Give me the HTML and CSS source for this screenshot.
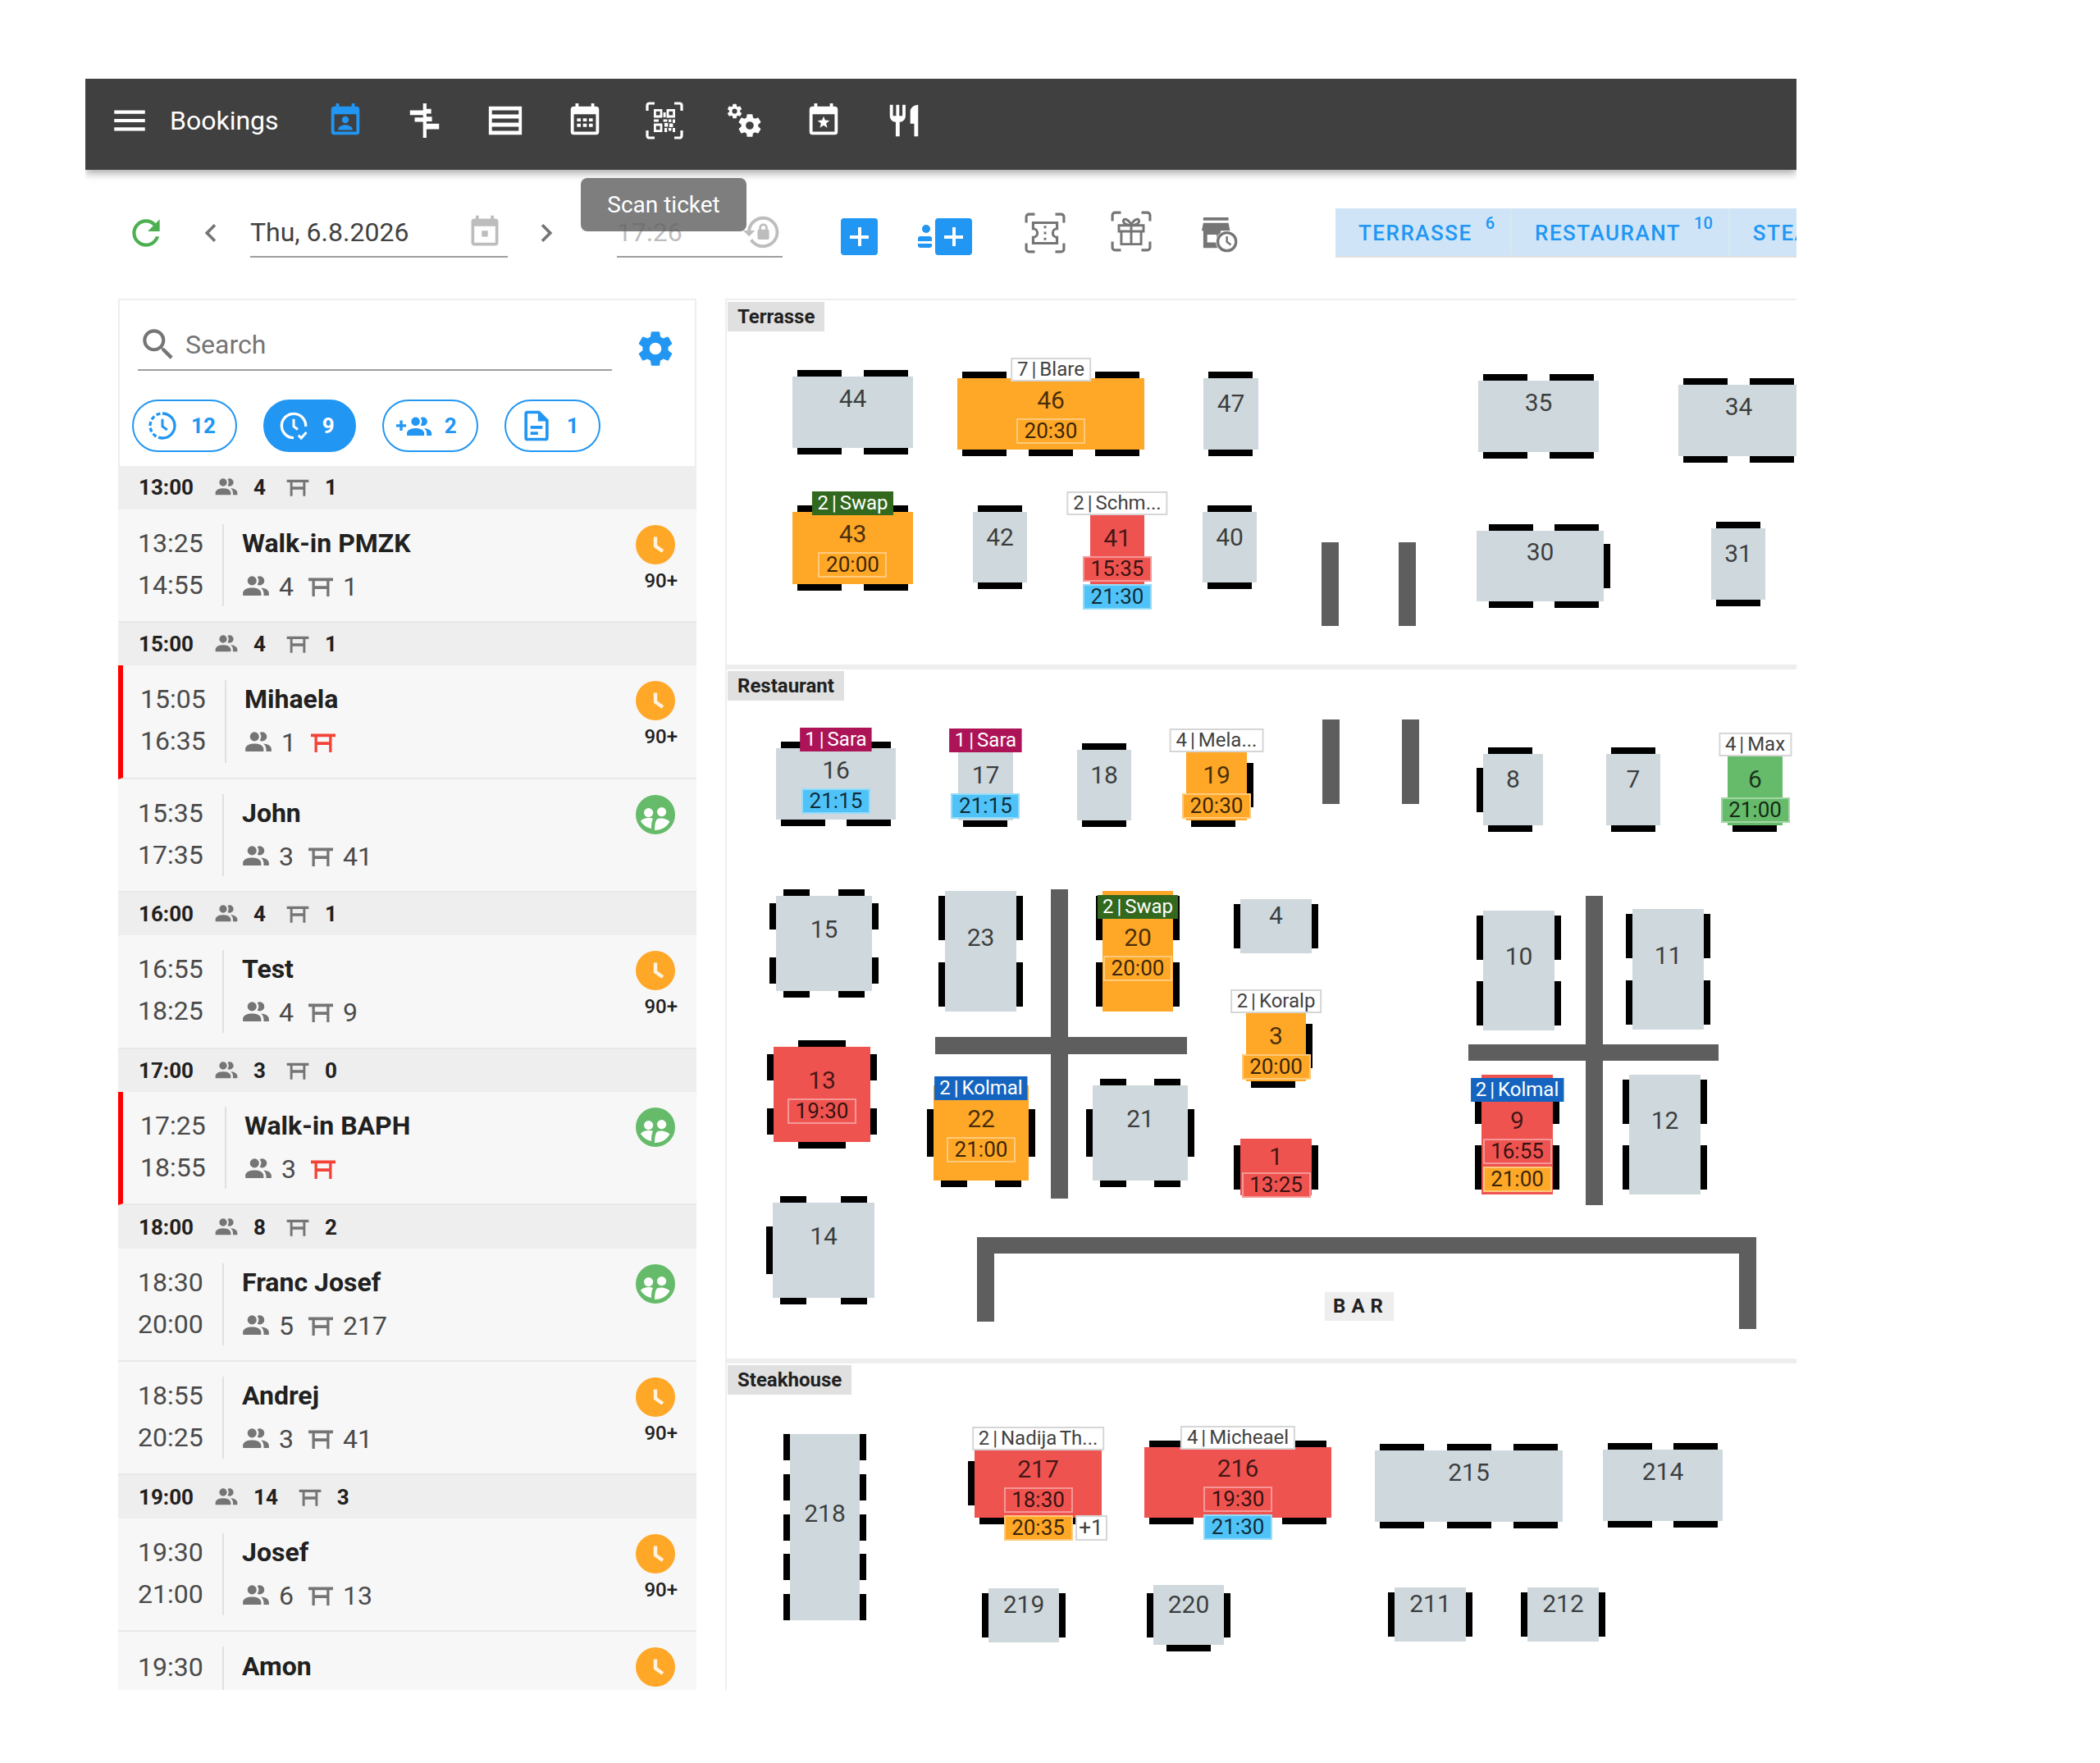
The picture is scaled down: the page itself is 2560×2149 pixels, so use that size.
FILE: index.html
```html
<!DOCTYPE html>
<html lang="en">
<head>
    <meta charset="UTF-8">
    <title>Bookings</title>
    <link rel="stylesheet" href="styles.css">
</head>
<body>
    <!-- Icon sprite -->
    <svg class="sprite" xmlns="http://www.w3.org/2000/svg">
        <symbol id="i-menu" viewBox="0 0 24 24"><path d="M3 6h18v2H3zM3 11h18v2H3zM3 16h18v2H3z"/></symbol>
        <symbol id="i-cal-account" viewBox="0 0 24 24"><path fill-rule="evenodd" d="M19 3h-1V1h-2v2H8V1H6v2H5a2 2 0 0 0-2 2v14a2 2 0 0 0 2 2h14a2 2 0 0 0 2-2V5a2 2 0 0 0-2-2zM5 8h14v11H5z"/><path d="M12 9.3a2.2 2.2 0 1 1 0 4.4a2.2 2.2 0 0 1 0-4.4zM7.5 18v-.8c0-1.6 3-2.5 4.5-2.5s4.5.9 4.5 2.5v.8z"/></symbol>
        <symbol id="i-gantt" viewBox="0 0 24 24"><path d="M10.800 1H13v22h-2.200zM2.500 5.500h8.300v3H2.500zM5.500 10h5.300v2.800H5.500zM13 4.500h3v3h-3zM13 9.500h3.500v3H13zM13 14h8v3.500h-8z"/></symbol>
        <symbol id="i-list" viewBox="0 0 24 24"><path fill-rule="evenodd" d="M1.500 3h21v18h-21zM3.500 5.500v2.600h17V5.500zM3.500 10.700v2.600h17v-2.600zM3.500 15.900v2.600h17v-2.600z"/></symbol>
        <symbol id="i-cal-month" viewBox="0 0 24 24"><path fill-rule="evenodd" d="M19 3h-1V1h-2v2H8V1H6v2H5a2 2 0 0 0-2 2v14a2 2 0 0 0 2 2h14a2 2 0 0 0 2-2V5a2 2 0 0 0-2-2zM5 8h14v11H5z"/><path d="M7 10.5h2.4v2H7zM10.8 10.5h2.4v2h-2.4zM14.6 10.5H17v2h-2.4zM7 14h2.4v2H7zM10.8 14h2.4v2h-2.4zM14.6 14H17v2h-2.4z"/></symbol>
        <symbol id="i-cal-star" viewBox="0 0 24 24"><path fill-rule="evenodd" d="M19 3h-1V1h-2v2H8V1H6v2H5a2 2 0 0 0-2 2v14a2 2 0 0 0 2 2h14a2 2 0 0 0 2-2V5a2 2 0 0 0-2-2zM5 8h14v11H5z"/><path d="M12 9.2l1 2.6 2.8.2-2.2 1.8.8 2.7L12 15l-2.4 1.5.8-2.7-2.2-1.8 2.8-.2z"/></symbol>
        <symbol id="i-cal-today" viewBox="0 0 24 24"><path fill-rule="evenodd" d="M19 3h-1V1h-2v2H8V1H6v2H5a2 2 0 0 0-2 2v14a2 2 0 0 0 2 2h14a2 2 0 0 0 2-2V5a2 2 0 0 0-2-2zM5 8h14v11H5zM10 11v4h4v-4z"/></symbol>
        <symbol id="i-qr" viewBox="0 0 24 24">
            <path fill="none" stroke="currentColor" stroke-width="1.600" d="M1.500 6V2.700a1.200 1.200 0 0 1 1.200-1.200H6M18 1.500h3.300a1.200 1.200 0 0 1 1.200 1.200V6M22.500 18v3.300a1.200 1.200 0 0 1-1.200 1.200H18M6 22.500H2.700a1.200 1.200 0 0 1-1.200-1.200V18"/>
            <path fill-rule="evenodd" d="M5.500 5h5.200v5.200H5.500zM6.900 6.400v2.400h2.400V6.400zM13.300 5h5.200v5.200h-5.200zM14.700 6.400v2.400h2.400V6.400zM5.500 13.800h5.200V19H5.500zM6.900 15.200v2.400h2.400v-2.400z"/>
            <path d="M11.300 7h1.500v3h-1.500zM11.300 11.200h2.400v1.500h-2.400zM5.500 11.200h3v1.500h-3zM14.500 11.200h1.700v1.700h-1.700zM17 11.200h1.500v2.200h-1.500zM12 13.500h2.200v2.200H12zM15 13.800h2.200v2.200H15zM12 16.500h1.600V19H12zM14.500 16.500h1.700v1.700h-1.700zM17 16.500h1.500V19H17z"/>
        </symbol>
        <symbol id="i-cog" viewBox="0 0 24 24"><path d="M12,15.5A3.5,3.5 0 0,1 8.5,12A3.5,3.5 0 0,1 12,8.5A3.5,3.5 0 0,1 15.5,12A3.5,3.5 0 0,1 12,15.5M19.43,12.97C19.47,12.65 19.5,12.33 19.5,12C19.5,11.67 19.47,11.34 19.43,11L21.54,9.37C21.73,9.22 21.78,8.95 21.66,8.73L19.66,5.27C19.54,5.05 19.27,4.96 19.05,5.05L16.56,6.05C16.04,5.66 15.5,5.32 14.87,5.07L14.5,2.42C14.46,2.18 14.25,2 14,2H10C9.75,2 9.54,2.18 9.5,2.42L9.13,5.07C8.5,5.32 7.96,5.66 7.44,6.05L4.95,5.05C4.73,4.96 4.46,5.05 4.34,5.27L2.34,8.73C2.21,8.95 2.27,9.22 2.46,9.37L4.57,11C4.53,11.34 4.5,11.67 4.5,12C4.5,12.33 4.53,12.65 4.57,12.97L2.46,14.63C2.27,14.78 2.21,15.05 2.34,15.27L4.34,18.73C4.46,18.95 4.73,19.03 4.95,18.95L7.44,17.94C7.96,18.34 8.5,18.68 9.13,18.93L9.5,21.58C9.54,21.82 9.75,22 10,22H14C14.25,22 14.46,21.82 14.5,21.58L14.87,18.93C15.5,18.67 16.04,18.34 16.56,17.94L19.05,18.95C19.27,19.03 19.54,18.95 19.66,18.73L21.66,15.27C21.78,15.05 21.73,14.78 21.54,14.63L19.43,12.97Z"/></symbol>
        <symbol id="i-cogs" viewBox="0 0 24 24">
            <path transform="translate(.5 .5) scale(.46)" d="M12,15.5A3.5,3.5 0 0,1 8.5,12A3.5,3.5 0 0,1 12,8.5A3.5,3.5 0 0,1 15.5,12A3.5,3.5 0 0,1 12,15.5M19.43,12.97C19.47,12.65 19.5,12.33 19.5,12C19.5,11.67 19.47,11.34 19.43,11L21.54,9.37C21.73,9.22 21.78,8.95 21.66,8.73L19.66,5.27C19.54,5.05 19.27,4.96 19.05,5.05L16.56,6.05C16.04,5.66 15.5,5.32 14.87,5.07L14.5,2.42C14.46,2.18 14.25,2 14,2H10C9.75,2 9.54,2.18 9.5,2.42L9.13,5.07C8.5,5.32 7.96,5.66 7.44,6.05L4.95,5.05C4.73,4.96 4.46,5.05 4.34,5.27L2.34,8.73C2.21,8.95 2.27,9.22 2.46,9.37L4.57,11C4.53,11.34 4.5,11.67 4.5,12C4.5,12.33 4.53,12.65 4.57,12.97L2.46,14.63C2.27,14.78 2.21,15.05 2.34,15.27L4.34,18.73C4.46,18.95 4.73,19.03 4.95,18.95L7.44,17.94C7.96,18.34 8.5,18.68 9.13,18.93L9.5,21.58C9.54,21.82 9.75,22 10,22H14C14.25,22 14.46,21.82 14.5,21.58L14.87,18.93C15.5,18.67 16.04,18.34 16.56,17.94L19.05,18.95C19.27,19.03 19.54,18.95 19.66,18.73L21.66,15.27C21.78,15.05 21.73,14.78 21.54,14.63L19.43,12.97Z"/>
            <path transform="translate(7 6.500) scale(.72)" d="M12,15.5A3.5,3.5 0 0,1 8.5,12A3.5,3.5 0 0,1 12,8.5A3.5,3.5 0 0,1 15.5,12A3.5,3.5 0 0,1 12,15.5M19.43,12.97C19.47,12.65 19.5,12.33 19.5,12C19.5,11.67 19.47,11.34 19.43,11L21.54,9.37C21.73,9.22 21.78,8.95 21.66,8.73L19.66,5.27C19.54,5.05 19.27,4.96 19.05,5.05L16.56,6.05C16.04,5.66 15.5,5.32 14.87,5.07L14.5,2.42C14.46,2.18 14.25,2 14,2H10C9.75,2 9.54,2.18 9.5,2.42L9.13,5.07C8.5,5.32 7.96,5.66 7.44,6.05L4.95,5.05C4.73,4.96 4.46,5.05 4.34,5.27L2.34,8.73C2.21,8.95 2.27,9.22 2.46,9.37L4.57,11C4.53,11.34 4.5,11.67 4.5,12C4.5,12.33 4.53,12.65 4.57,12.97L2.46,14.63C2.27,14.78 2.21,15.05 2.34,15.27L4.34,18.73C4.46,18.95 4.73,19.03 4.95,18.95L7.44,17.94C7.96,18.34 8.5,18.68 9.13,18.93L9.5,21.58C9.54,21.82 9.75,22 10,22H14C14.25,22 14.46,21.82 14.5,21.58L14.87,18.93C15.5,18.67 16.04,18.34 16.56,17.94L19.05,18.95C19.27,19.03 19.54,18.95 19.66,18.73L21.66,15.27C21.78,15.05 21.73,14.78 21.54,14.63L19.43,12.97Z"/>
        </symbol>
        <symbol id="i-cutlery" viewBox="0 0 24 24"><path d="M11,9H9V2H7V9H5V2H3V9C3,11.12 4.66,12.84 6.75,12.97V22H9.25V12.97C11.34,12.84 13,11.12 13,9V2H11V9M16,6V14H18.5V22H21V2C18.24,2 16,4.24 16,6Z"/></symbol>
        <symbol id="i-refresh" viewBox="0 0 24 24"><path d="M17.65,6.35C16.2,4.9 14.21,4 12,4A8,8 0 0,0 4,12A8,8 0 0,0 12,20C15.73,20 18.84,17.45 19.73,14H17.65C16.83,16.33 14.61,18 12,18A6,6 0 0,1 6,12A6,6 0 0,1 12,6C13.66,6 15.14,6.69 16.22,7.78L13,11H20V4L17.65,6.35Z"/></symbol>
        <symbol id="i-left" viewBox="0 0 24 24"><path d="M15.41,16.58L10.83,12L15.41,7.41L14,6L8,12L14,18L15.41,16.58Z"/></symbol>
        <symbol id="i-right" viewBox="0 0 24 24"><path d="M8.59,16.58L13.17,12L8.59,7.41L10,6L16,12L10,18L8.59,16.58Z"/></symbol>
        <symbol id="i-lock-reset" viewBox="0 0 24 24"><path d="M12.63,2C18.16,2 22.64,6.5 22.64,12C22.64,17.5 18.16,22 12.63,22C9.12,22 6.05,20.18 4.26,17.43L5.84,16.18C7.25,18.47 9.76,20 12.64,20A8,8 0 0,0 20.64,12A8,8 0 0,0 12.64,4C8.56,4 5.2,7.06 4.71,11H7.47L3.73,14.73L0,11H2.69C3.19,5.95 7.45,2 12.63,2M15.59,10.24C16.09,10.25 16.5,10.65 16.5,11.16V15.77C16.5,16.27 16.09,16.69 15.58,16.69H10.05C9.54,16.69 9.13,16.27 9.13,15.77V11.16C9.13,10.65 9.54,10.25 10.04,10.24V9.23C10.04,7.7 11.29,6.46 12.81,6.46C14.34,6.46 15.59,7.7 15.59,9.23V10.24M12.81,7.86C12.06,7.86 11.44,8.47 11.44,9.23V10.24H14.19V9.23C14.19,8.47 13.57,7.86 12.81,7.86Z"/></symbol>
        <symbol id="i-ticket-scan" viewBox="0 0 24 24">
            <path fill="none" stroke="currentColor" stroke-width="1.500" d="M1 6V2.500A1.500 1.500 0 0 1 2.500 1H6M18 1h3.500A1.500 1.500 0 0 1 23 2.500V6M23 18v3.500a1.500 1.500 0 0 1-1.500 1.500H18M6 23H2.500A1.500 1.500 0 0 1 1 21.500V18"/>
            <path fill="none" stroke="currentColor" stroke-width="1.500" d="M5 6h14v3.500a2.500 2.500 0 0 0 0 5V18H5v-3.500a2.500 2.500 0 0 0 0-5z"/>
            <path d="M11.300 7.800h1.400v1.400h-1.400zM11.300 11.300h1.400v1.400h-1.400zM11.300 14.800h1.400v1.400h-1.400z"/>
        </symbol>
        <symbol id="i-gift-scan" viewBox="0 0 24 24">
            <path fill="none" stroke="currentColor" stroke-width="1.500" d="M1 6V2.500A1.500 1.500 0 0 1 2.500 1H6M18 1h3.500A1.500 1.500 0 0 1 23 2.500V6M23 18v3.500a1.500 1.500 0 0 1-1.500 1.500H18M6 23H2.500A1.500 1.500 0 0 1 1 21.500V18"/>
            <path fill="none" stroke="currentColor" stroke-width="1.400" d="M6.200 12h11.600v7.500H6.200zM4.800 8.500h14.400V12H4.800zM12 8.500v11M12 8.500c-1-3-4-4.500-4.500-3S9 8.500 12 8.500c3 0 5-1.500 4.500-3S13 5.500 12 8.500z"/>
        </symbol>
        <symbol id="i-store-clock" viewBox="0 0 24 24">
            <path fill-rule="evenodd" d="M1.500 1h16v2h-16zM1.500 4.500h16l1 5H.5zM1.500 9.500h11v11h-11zM4 12v5h6v-5z"/>
            <circle cx="16.500" cy="16.500" r="7" fill="#fff"/>
            <circle cx="16.500" cy="16.500" r="5.800" fill="none" stroke="currentColor" stroke-width="1.700"/>
            <path fill="none" stroke="currentColor" stroke-width="1.300" d="M16.500 13v3.500l2.500 2"/>
        </symbol>
        <symbol id="i-search" viewBox="0 0 24 24"><path d="M9.5,3A6.5,6.5 0 0,1 16,9.5C16,11.11 15.41,12.59 14.44,13.73L14.71,14H15.5L20.5,19L19,20.5L14,15.5V14.71L13.73,14.44C12.59,15.41 11.11,16 9.5,16A6.5,6.5 0 0,1 3,9.5A6.5,6.5 0 0,1 9.5,3M9.5,5C7,5 5,7 5,9.5C5,12 7,14 9.5,14C12,14 14,12 14,9.5C14,7 12,5 9.5,5Z"/></symbol>
        <symbol id="i-clock-dash" viewBox="0 0 24 24">
            <path fill="none" stroke="currentColor" stroke-width="2" d="M12 3a9 9 0 0 1 0 18"/>
            <path fill="none" stroke="currentColor" stroke-width="2" stroke-dasharray="3 1.700" d="M12 21a9 9 0 0 1 0-18"/>
            <path fill="none" stroke="currentColor" stroke-width="1.800" d="M12 7v5.500l3.500 2.500"/>
        </symbol>
        <symbol id="i-clock-check" viewBox="0 0 24 24">
            <path fill="none" stroke="currentColor" stroke-width="2" d="M20.800 12.500A8.800 8.800 0 1 0 12 20.800"/>
            <path fill="none" stroke="currentColor" stroke-width="1.800" d="M12 7v5.500l3 2.200M15.500 19l2 2 3.800-4.200"/>
        </symbol>
        <symbol id="i-people-plus" viewBox="0 0 24 24">
            <path d="M2.400 8.500v2.500H0v1.800h2.400v2.500h1.800v-2.500h2.400V11H4.200V8.500z"/>
            <path transform="translate(5.500 3) scale(.82)" d="M16 17V19H2V17S2 13 9 13 16 17 16 17M12.500 7.500A3.500 3.500 0 1 0 9 11A3.500 3.500 0 0 0 12.500 7.500M15.940 13A5.320 5.320 0 0 1 18 17V19H22V17S22 13.370 15.940 13M15 4A3.390 3.390 0 0 0 13.070 4.590A5 5 0 0 1 13.070 10.410A3.390 3.390 0 0 0 15 11A3.500 3.500 0 0 0 15 4Z"/>
        </symbol>
        <symbol id="i-doc" viewBox="0 0 24 24"><path d="M6,2A2,2 0 0,0 4,4V20A2,2 0 0,0 6,22H18A2,2 0 0,0 20,20V8L14,2H6M6,4H13V9H18V20H6V4M8,12V14H16V12H8M8,16V18H13V16H8Z"/></symbol>
        <symbol id="i-people" viewBox="0 0 24 24"><path d="M16 17V19H2V17S2 13 9 13 16 17 16 17M12.500 7.500A3.500 3.500 0 1 0 9 11A3.500 3.500 0 0 0 12.500 7.500M15.940 13A5.320 5.320 0 0 1 18 17V19H22V17S22 13.370 15.940 13M15 4A3.390 3.390 0 0 0 13.070 4.590A5 5 0 0 1 13.070 10.410A3.390 3.390 0 0 0 15 11A3.500 3.500 0 0 0 15 4Z"/></symbol>
        <symbol id="i-table" viewBox="0 0 24 24"><path fill-rule="evenodd" d="M2 5h20v2.500h-3V20h-2.200v-6H7.200v6H5V7.500H2zM7.200 7.500v4h9.600v-4z"/></symbol>
        <symbol id="i-wait" viewBox="0 0 24 24">
            <circle cx="12" cy="12" r="12" fill="#ffa726"/>
            <path fill="none" stroke="#fff" stroke-opacity=".85" stroke-width="2.200" d="M12 7.300V12.800L16.500 16"/>
        </symbol>
        <symbol id="i-seated" viewBox="0 0 24 24">
            <circle cx="12" cy="12" r="12" fill="#66bb6a"/>
            <circle cx="7.800" cy="10.800" r="2.800" fill="#fff"/>
            <circle cx="15.800" cy="10.300" r="2.800" fill="#fff"/>
            <path fill="#fff" d="M3 16c1.200-1.800 5.500-2.500 7.500-1.500-.8 1.200-1 3.500-1 6a10 10 0 0 1-6.500-4.500zM11.500 21.500c0-3 .5-5.800 1.500-6.800 2-1 6.500-.2 7.700 1.700a10.200 10.200 0 0 1-9.200 5.100z"/>
        </symbol>
    </svg>

    <div class="app">
        <!-- Top bar -->
        <header class="topbar">
            <svg class="menu-icon"><use href="#i-menu"/></svg>
            <span class="app-title">Bookings</span>
            <nav class="nav">
                <a class="nav-btn active"><svg><use href="#i-cal-account"/></svg></a>
                <a class="nav-btn"><svg><use href="#i-gantt"/></svg></a>
                <a class="nav-btn"><svg><use href="#i-list"/></svg></a>
                <a class="nav-btn"><svg><use href="#i-cal-month"/></svg></a>
                <a class="nav-btn"><svg class="big"><use href="#i-qr"/></svg></a>
                <a class="nav-btn"><svg><use href="#i-cogs"/></svg></a>
                <a class="nav-btn"><svg><use href="#i-cal-star"/></svg></a>
                <a class="nav-btn"><svg><use href="#i-cutlery"/></svg></a>
            </nav>
        </header>

        <!-- Toolbar -->
        <div class="toolbar">
            <svg class="refresh"><use href="#i-refresh"/></svg>
            <svg class="chevron prev"><use href="#i-left"/></svg>
            <div class="field date-field">
                <span>Thu, 6.8.2026</span>
                <svg><use href="#i-cal-today"/></svg>
            </div>
            <svg class="chevron next"><use href="#i-right"/></svg>
            <div class="field time-field">
                <span>17:26</span>
                <svg><use href="#i-lock-reset"/></svg>
            </div>
            <span class="add-btn"></span>
            <span class="add-list"><i class="dots"></i><span class="add-btn"></span></span>
            <svg class="tool ticket"><use href="#i-ticket-scan"/></svg>
            <svg class="tool gift"><use href="#i-gift-scan"/></svg>
            <svg class="tool store"><use href="#i-store-clock"/></svg>
            <div class="tabs">
                <a class="tab">TERRASSE<sup>6</sup></a>
                <a class="tab">RESTAURANT<sup>10</sup></a>
                <a class="tab">STEAKHOUSE</a>
            </div>
            <div class="tooltip">Scan ticket</div>
        </div>

        <div class="main">
            <!-- Bookings list -->
            <aside class="sidebar">
                <div class="filters">
                    <div class="search-row">
                        <div class="search">
                            <svg><use href="#i-search"/></svg>
                            <span>Search</span>
                        </div>
                        <svg class="search-cog"><use href="#i-cog"/></svg>
                    </div>
                    <div class="pills">
                        <span class="pill"><svg><use href="#i-clock-dash"/></svg>12</span>
                        <span class="pill on"><svg><use href="#i-clock-check"/></svg>9</span>
                        <span class="pill"><svg class="wide"><use href="#i-people-plus"/></svg>2</span>
                        <span class="pill"><svg class="wide"><use href="#i-doc"/></svg>1</span>
                    </div>
                </div>

                <div class="slot-head"><b>13:00</b><svg class="ic-p"><use href="#i-people"/></svg><b class="c">4</b><svg class="ic-t"><use href="#i-table"/></svg><b class="c">1</b></div>
                <div class="row">
                    <div class="times"><span>13:25</span><span>14:55</span></div>
                    <div class="info">
                        <div class="name">Walk-in PMZK</div>
                        <div class="meta"><svg class="ic-p"><use href="#i-people"/></svg><span class="c">4</span><svg class="ic-t"><use href="#i-table"/></svg><span class="c">1</span></div>
                    </div>
                    <div class="status"><svg><use href="#i-wait"/></svg><span>90+</span></div>
                </div>

                <div class="slot-head"><b>15:00</b><svg class="ic-p"><use href="#i-people"/></svg><b class="c">4</b><svg class="ic-t"><use href="#i-table"/></svg><b class="c">1</b></div>
                <div class="row alert">
                    <div class="times"><span>15:05</span><span>16:35</span></div>
                    <div class="info">
                        <div class="name">Mihaela</div>
                        <div class="meta"><svg class="ic-p"><use href="#i-people"/></svg><span class="c">1</span><svg class="ic-t"><use href="#i-table"/></svg></div>
                    </div>
                    <div class="status"><svg><use href="#i-wait"/></svg><span>90+</span></div>
                </div>
                <div class="row">
                    <div class="times"><span>15:35</span><span>17:35</span></div>
                    <div class="info">
                        <div class="name">John</div>
                        <div class="meta"><svg class="ic-p"><use href="#i-people"/></svg><span class="c">3</span><svg class="ic-t"><use href="#i-table"/></svg><span class="c">41</span></div>
                    </div>
                    <div class="status"><svg><use href="#i-seated"/></svg></div>
                </div>

                <div class="slot-head"><b>16:00</b><svg class="ic-p"><use href="#i-people"/></svg><b class="c">4</b><svg class="ic-t"><use href="#i-table"/></svg><b class="c">1</b></div>
                <div class="row">
                    <div class="times"><span>16:55</span><span>18:25</span></div>
                    <div class="info">
                        <div class="name">Test</div>
                        <div class="meta"><svg class="ic-p"><use href="#i-people"/></svg><span class="c">4</span><svg class="ic-t"><use href="#i-table"/></svg><span class="c">9</span></div>
                    </div>
                    <div class="status"><svg><use href="#i-wait"/></svg><span>90+</span></div>
                </div>

                <div class="slot-head"><b>17:00</b><svg class="ic-p"><use href="#i-people"/></svg><b class="c">3</b><svg class="ic-t"><use href="#i-table"/></svg><b class="c">0</b></div>
                <div class="row alert">
                    <div class="times"><span>17:25</span><span>18:55</span></div>
                    <div class="info">
                        <div class="name">Walk-in BAPH</div>
                        <div class="meta"><svg class="ic-p"><use href="#i-people"/></svg><span class="c">3</span><svg class="ic-t"><use href="#i-table"/></svg></div>
                    </div>
                    <div class="status"><svg><use href="#i-seated"/></svg></div>
                </div>

                <div class="slot-head"><b>18:00</b><svg class="ic-p"><use href="#i-people"/></svg><b class="c">8</b><svg class="ic-t"><use href="#i-table"/></svg><b class="c">2</b></div>
                <div class="row">
                    <div class="times"><span>18:30</span><span>20:00</span></div>
                    <div class="info">
                        <div class="name">Franc Josef</div>
                        <div class="meta"><svg class="ic-p"><use href="#i-people"/></svg><span class="c">5</span><svg class="ic-t"><use href="#i-table"/></svg><span class="c">217</span></div>
                    </div>
                    <div class="status"><svg><use href="#i-seated"/></svg></div>
                </div>
                <div class="row">
                    <div class="times"><span>18:55</span><span>20:25</span></div>
                    <div class="info">
                        <div class="name">Andrej</div>
                        <div class="meta"><svg class="ic-p"><use href="#i-people"/></svg><span class="c">3</span><svg class="ic-t"><use href="#i-table"/></svg><span class="c">41</span></div>
                    </div>
                    <div class="status"><svg><use href="#i-wait"/></svg><span>90+</span></div>
                </div>

                <div class="slot-head"><b>19:00</b><svg class="ic-p"><use href="#i-people"/></svg><b class="c">14</b><svg class="ic-t"><use href="#i-table"/></svg><b class="c">3</b></div>
                <div class="row">
                    <div class="times"><span>19:30</span><span>21:00</span></div>
                    <div class="info">
                        <div class="name">Josef</div>
                        <div class="meta"><svg class="ic-p"><use href="#i-people"/></svg><span class="c">6</span><svg class="ic-t"><use href="#i-table"/></svg><span class="c">13</span></div>
                    </div>
                    <div class="status"><svg><use href="#i-wait"/></svg><span>90+</span></div>
                </div>
                <div class="row cut">
                    <div class="times"><span>19:30</span></div>
                    <div class="info">
                        <div class="name">Amon</div>
                    </div>
                    <div class="status"><svg><use href="#i-wait"/></svg></div>
                </div>
            </aside>

            <!-- Floor plan -->
            <section class="floor">
                <div class="area area-terrasse">
                    <span class="area-label">Terrasse</span>
                    <div class="wall w1"></div>
                    <div class="wall w2"></div>

                    <div class="tbl t44"><div class="chairs top"><i></i><i></i></div><div class="chairs bottom"><i></i><i></i></div><div class="no">44</div></div>
                    <div class="tbl orange t46"><div class="chairs top"><i></i><i></i><i></i></div><div class="chairs bottom"><i></i><i></i><i></i></div><div class="no">46<span class="tag">7 | Blare</span><div class="slots"><span class="time orange">20:30</span></div></div></div>
                    <div class="tbl narrow t47"><div class="chairs top"><i></i></div><div class="chairs bottom"><i></i></div><div class="no">47</div></div>
                    <div class="tbl t35"><div class="chairs top"><i></i><i></i></div><div class="chairs bottom"><i></i><i></i></div><div class="no">35</div></div>
                    <div class="tbl t34"><div class="chairs top"><i></i><i></i></div><div class="chairs bottom"><i></i><i></i></div><div class="no">34</div></div>
                    <div class="tbl orange t43"><div class="chairs top"><i></i><i></i></div><div class="chairs bottom"><i></i><i></i></div><div class="no">43<span class="tag swap">2 | Swap</span><div class="slots"><span class="time orange">20:00</span></div></div></div>
                    <div class="tbl narrow t42"><div class="chairs top"><i></i></div><div class="chairs bottom"><i></i></div><div class="no">42</div></div>
                    <div class="tbl narrow red t41"><div class="no">41<span class="tag">2 | Schm...</span><div class="slots"><span class="time red">15:35</span><span class="time blue">21:30</span></div></div></div>
                    <div class="tbl narrow t40"><div class="chairs top"><i></i></div><div class="chairs bottom"><i></i></div><div class="no">40</div></div>
                    <div class="tbl t30"><div class="chairs top"><i></i><i></i></div><div class="chairs bottom"><i></i><i></i></div><div class="chairs right one"><i></i></div><div class="no">30</div></div>
                    <div class="tbl narrow t31"><div class="chairs top"><i></i></div><div class="chairs bottom"><i></i></div><div class="no">31</div></div>
                </div>

                <div class="area area-restaurant">
                    <span class="area-label">Restaurant</span>
                    <div class="wall w3"></div>
                    <div class="wall w4"></div>
                    <div class="wall w5"></div>
                    <div class="wall w6"></div>
                    <div class="wall w7"></div>
                    <div class="wall w8"></div>
                    <div class="wall bar-top"></div>
                    <div class="wall bar-left"></div>
                    <div class="wall bar-right"></div>
                    <span class="bar-label">BAR</span>

                    <div class="tbl t16"><div class="chairs top"><i></i><i></i></div><div class="chairs bottom"><i></i><i></i></div><div class="no">16<span class="tag sara">1 | Sara</span><div class="slots"><span class="time blue">21:15</span></div></div></div>
                    <div class="tbl narrow t17"><div class="chairs bottom"><i></i></div><div class="no">17<span class="tag sara">1 | Sara</span><div class="slots"><span class="time blue">21:15</span></div></div></div>
                    <div class="tbl narrow t18"><div class="chairs top"><i></i></div><div class="chairs bottom"><i></i></div><div class="no">18</div></div>
                    <div class="tbl narrow orange t19"><div class="chairs bottom"><i></i></div><div class="chairs right one"><i></i></div><div class="no">19<span class="tag">4 | Mela...</span><div class="slots"><span class="time orange">20:30</span></div></div></div>
                    <div class="tbl narrow t8"><div class="chairs top"><i></i></div><div class="chairs bottom"><i></i></div><div class="chairs left one"><i></i></div><div class="no">8</div></div>
                    <div class="tbl narrow t7"><div class="chairs top"><i></i></div><div class="chairs bottom"><i></i></div><div class="no">7</div></div>
                    <div class="tbl narrow green t6"><div class="chairs bottom"><i></i></div><div class="no">6<span class="tag">4 | Max</span><div class="slots"><span class="time green">21:00</span></div></div></div>
                    <div class="tbl t15"><div class="chairs top short"><i></i><i></i></div><div class="chairs bottom short"><i></i><i></i></div><div class="chairs left short"><i></i><i></i></div><div class="chairs right short"><i></i><i></i></div><div class="no">15</div></div>
                    <div class="tbl t23"><div class="chairs left"><i></i><i></i></div><div class="chairs right"><i></i><i></i></div><div class="no">23</div></div>
                    <div class="tbl orange t20"><div class="chairs left"><i></i><i></i></div><div class="chairs right"><i></i><i></i></div><div class="no">20<span class="tag swap">2 | Swap</span><div class="slots"><span class="time orange">20:00</span></div></div></div>
                    <div class="tbl low t4"><div class="chairs left one"><i></i></div><div class="chairs right one"><i></i></div><div class="no">4</div></div>
                    <div class="tbl narrow orange t3"><div class="chairs bottom"><i></i></div><div class="chairs right one"><i></i></div><div class="no">3<span class="tag">2 | Koralp</span><div class="slots"><span class="time orange">20:00</span></div></div></div>
                    <div class="tbl low red t1"><div class="chairs left one"><i></i></div><div class="chairs right one"><i></i></div><div class="no">1<div class="slots"><span class="time red">13:25</span></div></div></div>
                    <div class="tbl t10"><div class="chairs left"><i></i><i></i></div><div class="chairs right"><i></i><i></i></div><div class="no">10</div></div>
                    <div class="tbl t11"><div class="chairs left"><i></i><i></i></div><div class="chairs right"><i></i><i></i></div><div class="no">11</div></div>
                    <div class="tbl red t13"><div class="chairs top one wide"><i></i></div><div class="chairs bottom one wide"><i></i></div><div class="chairs left short"><i></i><i></i></div><div class="chairs right short"><i></i><i></i></div><div class="no">13<div class="slots"><span class="time red">19:30</span></div></div></div>
                    <div class="tbl orange t22"><div class="chairs bottom short"><i></i><i></i></div><div class="chairs left one wide"><i></i></div><div class="chairs right one wide"><i></i></div><div class="no">22<span class="tag kolmal">2 | Kolmal</span><div class="slots"><span class="time orange">21:00</span></div></div></div>
                    <div class="tbl t21"><div class="chairs top short"><i></i><i></i></div><div class="chairs bottom short"><i></i><i></i></div><div class="chairs left one wide"><i></i></div><div class="chairs right one wide"><i></i></div><div class="no">21</div></div>
                    <div class="tbl red t9"><div class="chairs left"><i></i><i></i></div><div class="chairs right"><i></i><i></i></div><div class="no">9<span class="tag kolmal">2 | Kolmal</span><div class="slots"><span class="time red">16:55</span><span class="time orange">21:00</span></div></div></div>
                    <div class="tbl t12"><div class="chairs left"><i></i><i></i></div><div class="chairs right"><i></i><i></i></div><div class="no">12</div></div>
                    <div class="tbl t14"><div class="chairs top short"><i></i><i></i></div><div class="chairs bottom short"><i></i><i></i></div><div class="chairs left one wide"><i></i></div><div class="no">14</div></div>
                </div>

                <div class="area area-steakhouse">
                    <span class="area-label">Steakhouse</span>

                    <div class="tbl t218"><div class="chairs left tiny"><i></i><i></i><i></i><i></i><i></i></div><div class="chairs right tiny"><i></i><i></i><i></i><i></i><i></i></div><div class="no">218</div></div>
                    <div class="tbl red t217"><div class="chairs bottom"><i></i><i></i></div><div class="chairs left one"><i></i></div><div class="no">217<span class="tag">2 | Nadija Th...</span><div class="slots"><span class="time red">18:30</span><span class="time orange">20:35<span class="more">+1</span></span></div></div></div>
                    <div class="tbl red t216"><div class="chairs top"><i></i><i></i></div><div class="chairs bottom"><i></i><i></i></div><div class="no">216<span class="tag">4 | Micheael</span><div class="slots"><span class="time red">19:30</span><span class="time blue">21:30</span></div></div></div>
                    <div class="tbl t215"><div class="chairs top"><i></i><i></i><i></i></div><div class="chairs bottom"><i></i><i></i><i></i></div><div class="no">215</div></div>
                    <div class="tbl t214"><div class="chairs top"><i></i><i></i></div><div class="chairs bottom"><i></i><i></i></div><div class="no">214</div></div>
                    <div class="tbl low t219"><div class="chairs left one"><i></i></div><div class="chairs right one"><i></i></div><div class="no">219</div></div>
                    <div class="tbl narrow t220"><div class="chairs bottom one"><i></i></div><div class="chairs left one"><i></i></div><div class="chairs right one"><i></i></div><div class="no">220</div></div>
                    <div class="tbl low t211"><div class="chairs left one"><i></i></div><div class="chairs right one"><i></i></div><div class="no">211</div></div>
                    <div class="tbl low t212"><div class="chairs left one"><i></i></div><div class="chairs right one"><i></i></div><div class="no">212</div></div>
                </div>
            </section>
        </div>
    </div>
</body>
</html>
```

FILE: styles.css
```css
* {
    margin: 0;
    padding: 0;
    box-sizing: border-box;
}

body {
    font-family: Roboto, "Liberation Sans", sans-serif;
    background-color: #fff;
    color: #424242;
}

svg {
    fill: currentColor;
    flex: none;
}

.sprite {
    display: none;
}

.app {
    width: 2086px;
    height: 1964px;
    margin: 96px 0 0 104px;
    overflow: hidden;
    display: flex;
    flex-direction: column;
}

/* Top bar */
.topbar {
    height: 111px;
    flex: none;
    position: relative;
    z-index: 2;
    display: flex;
    align-items: center;
    padding: 0 0 10px 29px;
    background-color: #404040;
    color: #fff;
    box-shadow: 0 4px 10px rgba(0, 0, 0, 0.35);
}

.menu-icon {
    width: 50px;
    height: 50px;
}

.app-title {
    margin-left: 24px;
    font-size: 32px;
}

.nav {
    display: flex;
    margin-left: 33px;
}

.nav-btn {
    width: 97.200px;
    height: 48px;
    display: flex;
    align-items: center;
    justify-content: center;
}

.nav-btn svg {
    width: 46px;
    height: 46px;
}

.nav-btn svg.big {
    width: 48px;
    height: 48px;
}

.nav-btn.active {
    color: #2196f3;
}

/* Toolbar */
.toolbar {
    height: 157px;
    flex: none;
    position: relative;
    display: flex;
    align-items: center;
    padding: 0 0 3px 49px;
    white-space: nowrap;
}

.refresh {
    width: 50px;
    height: 50px;
    color: #4caf50;
}

.chevron {
    width: 44px;
    height: 44px;
    color: #757575;
}

.chevron.prev {
    margin-left: 32px;
}

.chevron.next {
    margin-left: 25px;
}

.field {
    height: 57px;
    margin-top: 3px;
    flex: none;
    display: flex;
    align-items: center;
    justify-content: space-between;
    border-bottom: 2px solid #9e9e9e;
    font-size: 32px;
    padding-bottom: 3px;
}

.date-field {
    width: 314px;
    margin-left: 26px;
    padding-right: 6px;
}

.date-field svg {
    width: 44px;
    height: 44px;
    color: #bdbdbd;
}

.time-field {
    width: 202px;
    margin-left: 64px;
    color: #bdbdbd;
    padding-right: 2px;
}

.time-field svg {
    width: 46px;
    height: 46px;
}

/* Plus buttons */
.add-btn {
    width: 45px;
    height: 45px;
    margin-left: 71px;
    margin-top: 9px;
    position: relative;
    background-color: #2196f3;
    border-radius: 4px;
    flex: none;
}

.add-btn::before,
.add-btn::after {
    content: "";
    position: absolute;
    background-color: #fff;
}

.add-btn::before {
    left: 21px;
    top: 11px;
    width: 4px;
    height: 23px;
}

.add-btn::after {
    left: 11px;
    top: 21px;
    width: 23px;
    height: 4px;
}

.add-list {
    display: flex;
    flex: none;
    align-items: center;
    margin-left: 49px;
    margin-top: 9px;
}

.add-list .add-btn {
    margin: 0 0 0 4px;
}

.dots {
    width: 17px;
    height: 30px;
    display: block;
    position: relative;
}

.dots::before {
    content: "";
    position: absolute;
    left: 5px;
    top: 0;
    width: 10px;
    height: 10px;
    border-radius: 50%;
    background-color: #2196f3;
}

.dots::after {
    content: "";
    position: absolute;
    left: 0;
    top: 14px;
    width: 17px;
    height: 14px;
    background:
        linear-gradient(#2196f3, #2196f3) 0 0 / 17px 6px no-repeat,
        linear-gradient(#2196f3, #2196f3) 0 9px / 17px 5px no-repeat;
    border-radius: 3px;
}

.tool {
    width: 50px;
    height: 50px;
    color: #757575;
}

.ticket {
    margin-left: 64px;
    margin-top: -1px;
}

.gift {
    margin-left: 55px;
    margin-top: -4px;
}

.store {
    width: 46px;
    height: 46px;
    margin-left: 60px;
    margin-top: 3px;
}

/* Area tabs */
.tabs {
    display: flex;
    flex: none;
    height: 60px;
    margin-left: 118px;
    background-color: #cfe5f7;
    border-bottom: 2px solid #e0e0e0;
}

.tab {
    display: flex;
    align-items: center;
    padding: 2px 19px 0 28px;
    color: #2196f3;
    font-size: 26px;
    font-weight: 500;
    letter-spacing: 1.500px;
    border-right: 2px solid #dae6f0;
}

.tab sup {
    margin-left: 16px;
    position: relative;
    top: -12px;
    font-size: 20px;
    line-height: 1;
    letter-spacing: 0;
}

.tooltip {
    position: absolute;
    left: 604px;
    top: 10px;
    width: 202px;
    height: 65px;
    z-index: 3;
    display: flex;
    align-items: center;
    justify-content: center;
    border-radius: 8px;
    background-color: rgba(97, 97, 97, 0.82);
    color: #fff;
    font-size: 28px;
}

/* Layout */
.main {
    flex: 1;
    display: flex;
    min-height: 0;
    padding-left: 40px;
}

/* Sidebar */
.sidebar {
    width: 705px;
    flex: none;
    overflow: hidden;
}

.filters {
    height: 204px;
    padding: 28px 0 0 22px;
    border: 2px solid #eee;
    border-bottom: none;
}

.search-row {
    display: flex;
}

.search {
    width: 578px;
    height: 58px;
    display: flex;
    align-items: center;
    padding-bottom: 4px;
    border-bottom: 2px solid #9e9e9e;
    font-size: 32px;
    color: #757575;
}

.search svg {
    width: 50px;
    height: 50px;
    margin-right: 8px;
}

.search-cog {
    width: 50px;
    height: 50px;
    margin: 6px 0 0 28px;
    color: #2196f3;
}

.pills {
    display: flex;
    gap: 32px;
    margin: 35px 0 0 -7px;
}

.pill {
    height: 64px;
    display: flex;
    align-items: center;
    gap: 15px;
    padding: 0 24px 0 15px;
    border: 2px solid #2196f3;
    border-radius: 32px;
    color: #2196f3;
    font-size: 26px;
    font-weight: 700;
}

.pill svg {
    width: 40px;
    height: 40px;
}

.pill svg.wide {
    width: 44px;
    height: 44px;
}

.pill.on {
    background-color: #2196f3;
    color: #fff;
}

.slot-head {
    height: 52.500px;
    display: flex;
    align-items: center;
    padding-left: 25px;
    background-color: #eee;
    font-size: 26px;
    color: #212121;
}

.slot-head b {
    font-weight: 700;
}

.slot-head .ic-p,
.slot-head .ic-t {
    width: 32px;
    height: 32px;
    color: #757575;
}

.slot-head .ic-p {
    margin-left: 24px;
}

.slot-head .ic-t {
    margin-left: 23px;
}

.slot-head .c {
    margin-left: 17px;
}

.row {
    height: 138.250px;
    display: flex;
    padding: 18px 0;
    background-color: #f7f7f7;
    border-bottom: 2px solid #e8e8e8;
}

.row.alert {
    border-left: 6px solid #f00;
}

.times {
    width: 105px;
    margin-left: 24px;
    display: flex;
    flex-direction: column;
    justify-content: center;
    flex: none;
    padding-bottom: 2px;
    border-right: 2px solid #e0e0e0;
    font-size: 32px;
    line-height: 51px;
    color: #4a4a4a;
}

.row.alert .times {
    margin-left: 21px;
}

.info {
    flex: 1;
    padding: 0 0 2px 22px;
    display: flex;
    flex-direction: column;
    justify-content: center;
}

.name {
    font-size: 32px;
    font-weight: 700;
    line-height: 54px;
    color: #212121;
    flex: none;
}

.meta {
    height: 52px;
    display: flex;
    align-items: center;
    flex: none;
    font-size: 32px;
    color: #4a4a4a;
}

.meta .ic-p {
    width: 38px;
    height: 38px;
    margin-left: -2px;
    color: #757575;
}

.meta .ic-t {
    width: 36px;
    height: 36px;
    margin-left: 15px;
    color: #757575;
}

.row.alert .meta .ic-t {
    color: #f44336;
}

.meta .c {
    margin-left: 9px;
}

.status {
    display: flex;
    flex-direction: column;
    align-items: flex-end;
    padding: 1px 23px 0 0;
    font-size: 24px;
    font-weight: 500;
    color: #212121;
}

.status svg {
    width: 48px;
    height: 48px;
    margin-right: 3px;
}

.status span {
    margin-top: 6px;
    line-height: 28px;
}

.row.cut .times,
.row.cut .info {
    justify-content: flex-start;
}

.row.cut .name {
    margin-top: -3px;
}

/* Floor plan */
.floor {
    width: 1306px;
    flex: none;
    margin-left: 35px;
    overflow: hidden;
    border-left: 2px solid #eee;
    border-top: 2px solid #eee;
}

.area {
    position: relative;
    width: 1304px;
}

.area-terrasse {
    height: 444px;
}

.area-restaurant {
    height: 846px;
    border-top: 6px solid #eee;
}

.area-steakhouse {
    height: 404px;
    border-top: 6px solid #eee;
}

.area-label {
    display: inline-block;
    height: 36px;
    margin: 2px 0 0 1px;
    padding: 0 12px;
    background-color: #e0e0e0;
    color: #212121;
    font-size: 24px;
    font-weight: 700;
    line-height: 36px;
}

.wall {
    position: absolute;
    background-color: #5e5e5e;
}

.bar-label {
    position: absolute;
    left: 729px;
    top: 759px;
    width: 84px;
    height: 35px;
    padding-left: 4px;
    background-color: #eee;
    color: #212121;
    font-size: 24px;
    font-weight: 700;
    letter-spacing: 7px;
    line-height: 35px;
    text-align: center;
}

.w1 { left: 725px; top: 295px; width: 21px; height: 102px; }
.w2 { left: 819px; top: 295px; width: 21px; height: 102px; }
.w3 { left: 726px; top: 61px; width: 21px; height: 103px; }
.w4 { left: 823px; top: 61px; width: 21px; height: 103px; }
.w5 { left: 395px; top: 268px; width: 21px; height: 377px; }
.w6 { left: 254px; top: 448px; width: 307px; height: 21px; }
.w7 { left: 1047px; top: 276px; width: 21px; height: 377px; }
.w8 { left: 904px; top: 457px; width: 305px; height: 20px; }
.bar-top { left: 305px; top: 692px; width: 950px; height: 20px; }
.bar-left { left: 305px; top: 712px; width: 21px; height: 83px; }
.bar-right { left: 1234px; top: 702px; width: 21px; height: 102px; }

/* Tables */
.tbl {
    position: absolute;
    display: flex;
    flex-direction: column;
    align-items: center;
    justify-content: center;
    padding-bottom: 34px;
    background-color: #cfd8dc;
}

.tbl.narrow {
    padding-bottom: 25px;
}

.tbl.low {
    padding-bottom: 26px;
}

.tbl.orange,
.time.orange {
    background-color: #ffa726;
}

.tbl.red,
.time.red {
    background-color: #ef5350;
}

.tbl.green,
.time.green {
    background-color: #66bb6a;
}

.time.blue {
    background-color: #4fc3f7;
}

.chairs {
    position: absolute;
    display: flex;
    justify-content: space-between;
}

.chairs.top,
.chairs.bottom {
    left: 6px;
    right: 6px;
    height: 8px;
}

.chairs.top {
    top: -8px;
}

.chairs.bottom {
    bottom: -8px;
}

.chairs.left,
.chairs.right {
    top: 6px;
    bottom: 6px;
    width: 8px;
    flex-direction: column;
}

.chairs.left {
    left: -8px;
}

.chairs.right {
    right: -8px;
}

.chairs i {
    flex: 0 0 54px;
    background-color: #000;
}

.chairs.one {
    justify-content: center;
}

.chairs.wide i {
    flex-basis: 58px;
}

.chairs.short i {
    flex-basis: 32px;
}

.chairs.short.top,
.chairs.short.bottom {
    left: 9px;
    right: 9px;
}

.chairs.short.left,
.chairs.short.right {
    top: 9px;
    bottom: 9px;
}

.chairs.tiny {
    top: 0;
    bottom: 0;
}

.chairs.tiny i {
    flex-basis: 32px;
}

.no {
    position: relative;
    font-size: 30px;
    line-height: 36px;
    color: rgba(0, 0, 0, 0.72);
}

.tag {
    position: absolute;
    bottom: calc(100% + 5px);
    left: 50%;
    transform: translateX(-50%);
    z-index: 1;
    padding: 0 6px;
    border: 2px solid #d6d6d6;
    background-color: #fff;
    color: #424242;
    font-size: 24px;
    line-height: 25px;
    white-space: nowrap;
    word-spacing: -2px;
}

.narrow .tag {
    bottom: calc(100% + 10px);
}

.tag.swap,
.tag.sara,
.tag.kolmal {
    padding: 0 4px;
    color: #fff;
}

.tag.swap {
    background-color: #33691e;
    border-color: #33691e;
}

.tag.sara {
    background-color: #ad1457;
    border-color: #ad1457;
}

.tag.kolmal {
    background-color: #1565c0;
    border-color: #1565c0;
}

.slots {
    position: absolute;
    top: calc(100% + 4px);
    left: 50%;
    transform: translateX(-50%);
    z-index: 1;
    display: flex;
    flex-direction: column;
    gap: 3px;
}

.time {
    position: relative;
    width: 84px;
    height: 31px;
    display: block;
    border: 2px solid rgba(255, 255, 255, 0.4);
    color: rgba(0, 0, 0, 0.8);
    font-size: 26px;
    line-height: 27px;
    text-align: center;
}

.more {
    position: absolute;
    left: calc(100% + 5px);
    top: -2px;
    width: 39px;
    height: 31px;
    border: 2px solid #d6d6d6;
    background-color: #fff;
    color: #424242;
    line-height: 27px;
}

/* Terrasse */
.t44 { left: 80px; top: 93px; width: 147px; height: 87px; }
.t46 { left: 281px; top: 95px; width: 228px; height: 87px; }
.t47 { left: 581px; top: 95px; width: 67px; height: 87px; }
.t35 { left: 916px; top: 98px; width: 147px; height: 87px; }
.t34 { left: 1160px; top: 103px; width: 147px; height: 87px; }
.t43 { left: 80px; top: 258px; width: 147px; height: 88px; }
.t42 { left: 300px; top: 258px; width: 66px; height: 86px; }
.t41 { left: 443px; top: 258px; width: 66px; height: 88px; }
.t40 { left: 580px; top: 258px; width: 66px; height: 86px; }
.t30 { left: 914px; top: 281px; width: 155px; height: 86px; }
.t31 { left: 1200px; top: 278px; width: 66px; height: 87px; }

.t30 .top,
.t30 .bottom {
    left: 15px;
}

/* Restaurant */
.t16 { left: 60px; top: 96px; width: 146px; height: 87px; }
.t17 { left: 282px; top: 98px; width: 67px; height: 86px; }
.t18 { left: 427px; top: 98px; width: 66px; height: 86px; }
.t19 { left: 560px; top: 98px; width: 74px; height: 86px; }
.t8 { left: 922px; top: 103px; width: 73px; height: 87px; }
.t7 { left: 1072px; top: 103px; width: 66px; height: 87px; }
.t6 { left: 1220px; top: 103px; width: 67px; height: 87px; }
.t15 { left: 60px; top: 276px; width: 117px; height: 116px; }
.t23 { left: 266px; top: 270px; width: 87px; height: 147px; }
.t20 { left: 458px; top: 270px; width: 86px; height: 147px; }
.t4 { left: 626px; top: 280px; width: 87px; height: 66px; }
.t3 { left: 633px; top: 416px; width: 73px; height: 86px; }
.t1 { left: 626px; top: 572px; width: 87px; height: 69px; padding-bottom: 31px; }
.t10 { left: 922px; top: 294px; width: 87px; height: 146px; }
.t11 { left: 1104px; top: 292px; width: 87px; height: 147px; }
.t13 { left: 57px; top: 460px; width: 118px; height: 116px; }
.t22 { left: 252px; top: 507px; width: 116px; height: 116px; }
.t21 { left: 446px; top: 507px; width: 116px; height: 116px; }
.t9 { left: 920px; top: 494px; width: 87px; height: 146px; }
.t12 { left: 1100px; top: 494px; width: 87px; height: 146px; }
.t14 { left: 56px; top: 650px; width: 124px; height: 116px; }

.t1 .slots {
    top: calc(100% + 1px);
}

.t8 .top,
.t8 .bottom {
    right: 14px;
}

/* Steakhouse */
.t218 { left: 77px; top: 86px; width: 85px; height: 227px; }
.t217 { left: 302px; top: 104px; width: 155px; height: 84px; }
.t216 { left: 509px; top: 102px; width: 228px; height: 86px; }
.t215 { left: 790px; top: 106px; width: 229px; height: 87px; }
.t214 { left: 1068px; top: 105px; width: 146px; height: 87px; }
.t219 { left: 319px; top: 274px; width: 86px; height: 66px; }
.t220 { left: 520px; top: 270px; width: 86px; height: 73px; }
.t211 { left: 814px; top: 273px; width: 87px; height: 66px; }
.t212 { left: 976px; top: 273px; width: 87px; height: 66px; }
```
